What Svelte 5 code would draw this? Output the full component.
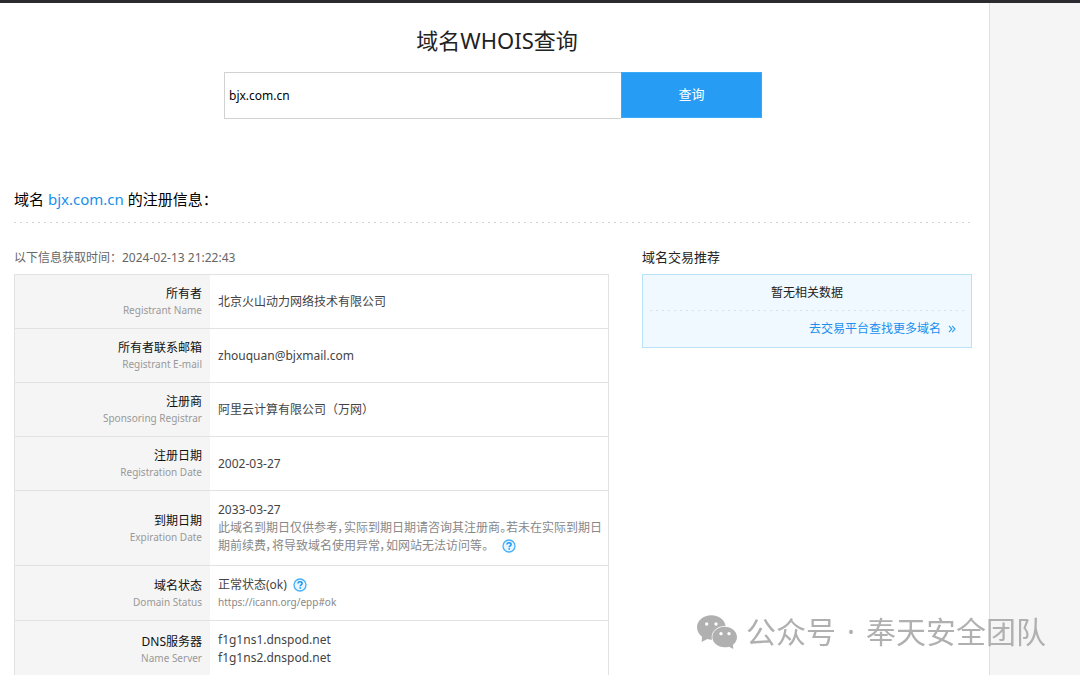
<script>
  let domain = $state('bjx.com.cn');

  const rows = [
    { label: '所有者', sub: 'Registrant Name', lines: [{ text: '北京火山动力网络技术有限公司' }] },
    { label: '所有者联系邮箱', sub: 'Registrant E-mail', lines: [{ text: 'zhouquan@bjxmail.com' }] },
    { label: '注册商', sub: 'Sponsoring Registrar', lines: [{ text: '阿里云计算有限公司（万网）' }] },
    { label: '注册日期', sub: 'Registration Date', lines: [{ text: '2002-03-27' }] },
    {
      label: '到期日期',
      sub: 'Expiration Date',
      lines: [
        { text: '2033-03-27' },
        {
          text: '此域名到期日仅供参考，实际到期日期请咨询其注册商。若未在实际到期日期前续费，将导致域名使用异常，如网站无法访问等。',
          kind: 'note',
          help: true
        }
      ]
    },
    {
      label: '域名状态',
      sub: 'Domain Status',
      lines: [
        { text: '正常状态(ok)', help: true },
        { text: 'https://icann.org/epp#ok', kind: 'small' }
      ]
    },
    {
      label: 'DNS服务器',
      sub: 'Name Server',
      lines: [{ text: 'f1g1ns1.dnspod.net' }, { text: 'f1g1ns2.dnspod.net' }]
    }
  ];
</script>

{#snippet helpIcon()}
  <button class="help" type="button" aria-label="帮助">
    <svg viewBox="0 0 14 14" width="14" height="14" aria-hidden="true">
      <circle cx="7" cy="7" r="6" fill="#e6f5ff" stroke="#45b0f8" stroke-width="1.3" />
      <path d="M5 5.6C5 4.3 5.8 3.7 7 3.7s2.1.7 2.1 1.7c0 1.4-1.9 1.4-1.9 2.9" fill="none" stroke="#1e96f0" stroke-width="1.5" />
      <rect x="6.4" y="9.2" width="1.6" height="1.5" fill="#1e96f0" />
    </svg>
  </button>
{/snippet}

<div class="page">
  <main>
    <h1>域名WHOIS查询</h1>
    <form class="search" onsubmit={(e) => e.preventDefault()}>
      <input type="text" aria-label="域名" bind:value={domain} />
      <button type="submit">查询</button>
    </form>

    <h2>域名 <a href="#domain">bjx.com.cn</a> 的注册信息：</h2>
    <div class="dashes"></div>

    <div class="columns">
      <section>
        <p class="fetched">以下信息获取时间：2024-02-13 21:22:43</p>
        <table>
          <tbody>
            {#each rows as row}
              <tr>
                <th scope="row">
                  <span class="label">{row.label}</span>
                  <span class="sub">{row.sub}</span>
                </th>
                <td>
                  {#each row.lines as line}
                    <div class={['line', line.kind]}>{line.text}{#if line.help}{@render helpIcon()}{/if}</div>
                  {/each}
                </td>
              </tr>
            {/each}
          </tbody>
        </table>
      </section>

      <section>
        <h3>域名交易推荐</h3>
        <div class="card">
          <p>暂无相关数据</p>
          <div class="dashes pale"></div>
          <a href="#market">
            去交易平台查找更多域名
            <svg viewBox="0 0 8 8" width="8" height="8" aria-hidden="true">
              <path d="M1 .8 3.8 4 1 7.2M4.2 .8 7 4 4.2 7.2" fill="none" stroke="#35a3ea" stroke-width="1.2" />
            </svg>
          </a>
        </div>
      </section>
    </div>
  </main>

  <div class="watermark">
    <svg viewBox="0 0 120 102" width="40" height="34" aria-hidden="true">
      <path d="M43 1C19 1 0 17 0 37c0 11 6 21 15 28l-1 16 17-9c4 1 8 2 13 2 24 0 42-17 42-37S67 1 43 1Z" fill="#b0b0b0" />
      <path d="M83 35c20 0 37 14 37 31 0 10-5 18-12 24l1 12-13-7c-4 1-8 2-13 2-20 0-37-14-37-31s17-31 37-31Z" fill="#b0b0b0" stroke="#fff" stroke-width="4" paint-order="stroke" />
      <g fill="#fff">
        <circle cx="29" cy="27" r="5" />
        <circle cx="57" cy="27" r="5" />
        <circle cx="72" cy="56" r="5" />
        <circle cx="96" cy="56" r="5" />
      </g>
    </svg>
    <span>公众号</span>
    <span class="dot">·</span>
    <span>奉天安全团队</span>
  </div>
</div>

<style>
  :global(body) {
    background: #f5f5f5;
  }

  .page {
    display: flex;
    box-sizing: border-box;
    min-height: 100vh;
    padding-right: 90px;
    border-top: 3px solid #2b2a2e;
    font-family: 'Noto Sans', 'Noto Sans CJK SC', sans-serif;
    font-size: 12px;
    line-height: 18px;
    color: #444;
  }

  main {
    flex: 1;
    min-width: 0;
    padding: 19px 17px 0 14px;
    background: #fff;
    border-right: 1px solid #e0e0e0;
  }

  h1,
  h2,
  h3,
  p {
    margin: 0;
    font-weight: 400;
  }

  h1 {
    padding-left: 8px;
    font-size: 22px;
    line-height: 36px;
    text-align: center;
    color: #222;
  }

  .search {
    display: flex;
    max-width: 538px;
    height: 47px;
    margin: 14px auto 0;
  }

  .search input {
    flex: 1;
    min-width: 0;
    box-sizing: border-box;
    padding: 0 4px;
    border: 1px solid #d2d2d2;
    border-right: 0;
    border-radius: 0;
    outline: 0;
    background: #fff;
    font: inherit;
    color: #000;
  }

  .search button {
    width: 141px;
    height: 46px;
    padding: 0 0 2px;
    border: 1px solid #3ba8f8;
    background: #269cf4;
    font: inherit;
    font-size: 13px;
    color: #fff;
  }

  a {
    color: #1a8fee;
    text-decoration: none;
  }

  h2 {
    margin-top: 67px;
    padding-bottom: 10px;
    font-size: 15px;
    line-height: 26px;
    color: #000;
  }

  .dashes {
    height: 1px;
    background: repeating-linear-gradient(90deg, #d2d2d2 0 2px, transparent 2px 6px);
  }

  .dashes.pale {
    background: repeating-linear-gradient(90deg, #d8e0e4 0 2px, transparent 2px 6px);
  }

  .columns {
    display: grid;
    grid-template-columns: minmax(0, 1fr) 330px;
    gap: 33px;
    align-items: start;
    margin-top: 26px;
  }

  .fetched,
  h3 {
    padding-bottom: 7px;
    color: #666;
  }

  h3 {
    padding-bottom: 9px;
    font-size: 13px;
    line-height: 16px;
    color: #222;
  }

  table {
    width: 100%;
    border: 1px solid #e2e2e2;
    border-collapse: collapse;
    table-layout: fixed;
  }

  th,
  td {
    padding: 10px 8px;
    border-bottom: 1px solid #e2e2e2;
    vertical-align: middle;
    font-weight: 400;
  }

  td {
    padding-right: 2px;
  }

  th {
    width: 179px;
    background: #f5f5f5;
    text-align: right;
  }

  .label,
  .sub {
    display: block;
  }

  .label {
    color: #111;
  }

  .sub {
    font-size: 10px;
    line-height: 15px;
    color: #999;
  }

  .note {
    font-feature-settings: 'palt';
    color: #888;
  }

  .small {
    font-size: 10px;
    line-height: 16px;
    color: #888;
  }

  .help {
    display: inline-flex;
    margin-left: 6px;
    padding: 0;
    border: 0;
    background: none;
    vertical-align: -3px;
  }

  .note .help {
    margin-left: 14px;
  }

  .card {
    padding: 0 7px;
    border: 1px solid #b9e2f7;
    background: #f0f9ff;
  }

  .card p {
    padding: 9px 0 8px;
    text-align: center;
    color: #222;
  }

  .card a {
    display: flex;
    align-items: center;
    justify-content: flex-end;
    gap: 7px;
    padding: 9px 8px;
  }

  .watermark {
    position: fixed;
    right: 34px;
    bottom: 21px;
    display: flex;
    align-items: center;
    font-family: 'Noto Sans', 'Noto Sans CJK SC', sans-serif;
    font-size: 30px;
    line-height: 44px;
    color: #b0b0b0;
    white-space: nowrap;
  }

  .watermark svg {
    margin-right: 9px;
  }

  .dot {
    width: 30px;
    text-align: center;
  }
</style>
